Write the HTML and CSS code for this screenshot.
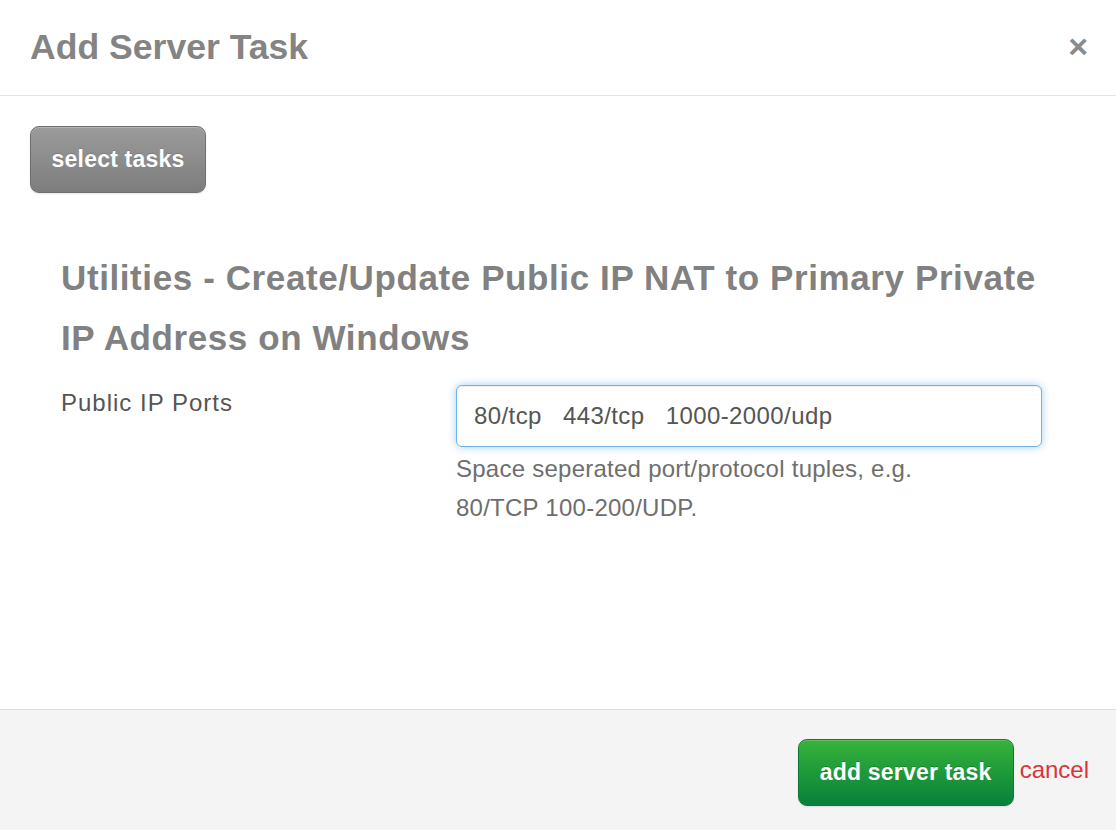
FILE: index.html
```html
<!DOCTYPE html>
<html>
<head>
<meta charset="utf-8">
<link rel="stylesheet" href="styles.css">
</head>
<body>
<div class="modal">
  <div class="modal-header">
    <h3 class="modal-title">Add Server Task</h3>
    <button class="close" type="button">×</button>
  </div>
  <div class="modal-body">
    <button class="btn btn-gray" type="button">select tasks</button>
    <div class="task">
      <h4 class="task-title">Utilities - Create/Update Public IP NAT to Primary Private IP Address on Windows</h4>
      <div class="form-row">
        <label class="form-label">Public IP Ports</label>
        <div class="form-control-wrap">
          <input class="form-input" type="text" value="80/tcp   443/tcp   1000-2000/udp">
          <p class="help">Space seperated port/protocol tuples, e.g.<br>80/TCP 100-200/UDP.</p>
        </div>
      </div>
    </div>
  </div>
  <div class="modal-footer">
    <button class="btn btn-green" type="button">add server task</button>
    <a class="cancel" href="#">cancel</a>
  </div>
</div>
</body>
</html>
```
FILE: styles.css
```css
* { box-sizing: border-box; }
html, body { margin: 0; padding: 0; }
body {
  font-family: "Liberation Sans", Arial, Helvetica, sans-serif;
  background: #fff;
  color: #555;
}
.modal {
  width: 1116px;
  height: 830px;
  display: flex;
  flex-direction: column;
}
.modal-header {
  height: 96px;
  flex: none;
  border-bottom: 1px solid #e5e5e5;
  display: flex;
  align-items: center;
  justify-content: space-between;
  padding: 0 28px 0 30px;
}
.modal-title {
  margin: 0;
  font-size: 35.6px;
  font-weight: bold;
  color: #848484;
}
.close {
  border: 0;
  background: none;
  padding: 0;
  font-family: "Liberation Sans", Arial, sans-serif;
  font-size: 34px;
  font-weight: bold;
  color: #8a8a8a;
  line-height: 1;
  margin-top: -4px;
}
.modal-body {
  flex: 1;
  padding: 30px 30px 0 30px;
}
.btn {
  font-family: "Liberation Sans", Arial, sans-serif;
  font-weight: bold;
  color: #fff;
  border-radius: 9px;
  font-size: 23px;
  letter-spacing: 0.2px;
  cursor: pointer;
}
.btn-gray {
  width: 176px;
  height: 67px;
  background: linear-gradient(#9b9b9b, #7d7d7d);
  border: 1px solid #6f6f6f;
  box-shadow: inset 0 1px 0 rgba(255,255,255,0.25), 0 1px 2px rgba(0,0,0,0.1);
  text-shadow: 0 -1px 0 rgba(0,0,0,0.15);
}
.task {
  padding: 0 0 0 31px;
  margin-top: 55px;
}
.task-title {
  margin: 0;
  font-size: 35px;
  font-weight: bold;
  line-height: 60px;
  color: #818181;
  letter-spacing: 0.6px;
  width: 1000px;
}
.form-row {
  display: flex;
  margin-top: 17px;
}
.form-label {
  width: 395px;
  flex: none;
  font-size: 24px;
  letter-spacing: 1px;
  color: #555;
  line-height: 30px;
  padding-top: 3px;
}
.form-control-wrap {
  width: 586px;
}
.form-input {
  display: block;
  width: 586px;
  height: 62px;
  border: 1px solid #6fb3ea;
  border-radius: 6px;
  box-shadow: inset 0 1px 1px rgba(0,0,0,0.075), 0 0 8px rgba(102,175,233,0.6);
  outline: none;
  padding: 0 17px;
  font-family: "Liberation Sans", Arial, sans-serif;
  font-size: 24px;
  letter-spacing: 0.4px;
  color: #555;
}
.help {
  margin: 2px 0 0 0;
  font-size: 24px;
  letter-spacing: 0.25px;
  line-height: 39px;
  color: #6e6e6e;
}
.modal-footer {
  height: 121px;
  flex: none;
  background: #f4f4f4;
  border-top: 1px solid #dcdcdc;
  display: flex;
  align-items: center;
  justify-content: flex-end;
  padding: 4px 27px 0 0;
}
.btn-green {
  width: 216px;
  height: 67px;
  background: linear-gradient(#36b33b, #07803a);
  border: 1px solid #0d7a34;
  box-shadow: inset 0 1px 0 rgba(255,255,255,0.2), 0 1px 2px rgba(0,0,0,0.1);
  text-shadow: 0 -1px 0 rgba(0,0,0,0.2);
}
.cancel {
  margin-left: 6px;
  font-size: 24px;
  color: #d9343a;
  text-decoration: none;
  margin-bottom: 4px;
}
```
